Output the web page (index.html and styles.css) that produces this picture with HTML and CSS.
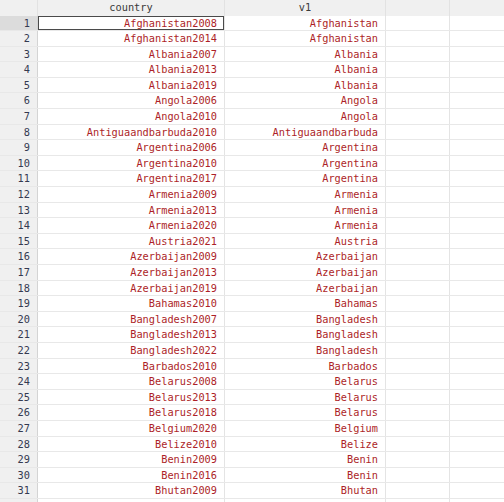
FILE: index.html
```html
<!DOCTYPE html>
<html>
<head>
<meta charset="utf-8">
<link rel="stylesheet" href="styles.css">
</head>
<body>
<div class="browser">
  <div class="row head">
    <div class="cell num"></div>
    <div class="cell title">country</div>
    <div class="cell title">v1</div>
    <div class="cell"></div>
    <div class="cell last"></div>
  </div>
  <div class="row sel"><div class="cell num">1</div><div class="cell val current">Afghanistan2008</div><div class="cell val">Afghanistan</div><div class="cell"></div><div class="cell last"></div></div>
  <div class="row"><div class="cell num">2</div><div class="cell val">Afghanistan2014</div><div class="cell val">Afghanistan</div><div class="cell"></div><div class="cell last"></div></div>
  <div class="row"><div class="cell num">3</div><div class="cell val">Albania2007</div><div class="cell val">Albania</div><div class="cell"></div><div class="cell last"></div></div>
  <div class="row"><div class="cell num">4</div><div class="cell val">Albania2013</div><div class="cell val">Albania</div><div class="cell"></div><div class="cell last"></div></div>
  <div class="row"><div class="cell num">5</div><div class="cell val">Albania2019</div><div class="cell val">Albania</div><div class="cell"></div><div class="cell last"></div></div>
  <div class="row"><div class="cell num">6</div><div class="cell val">Angola2006</div><div class="cell val">Angola</div><div class="cell"></div><div class="cell last"></div></div>
  <div class="row"><div class="cell num">7</div><div class="cell val">Angola2010</div><div class="cell val">Angola</div><div class="cell"></div><div class="cell last"></div></div>
  <div class="row"><div class="cell num">8</div><div class="cell val">Antiguaandbarbuda2010</div><div class="cell val">Antiguaandbarbuda</div><div class="cell"></div><div class="cell last"></div></div>
  <div class="row"><div class="cell num">9</div><div class="cell val">Argentina2006</div><div class="cell val">Argentina</div><div class="cell"></div><div class="cell last"></div></div>
  <div class="row"><div class="cell num">10</div><div class="cell val">Argentina2010</div><div class="cell val">Argentina</div><div class="cell"></div><div class="cell last"></div></div>
  <div class="row"><div class="cell num">11</div><div class="cell val">Argentina2017</div><div class="cell val">Argentina</div><div class="cell"></div><div class="cell last"></div></div>
  <div class="row"><div class="cell num">12</div><div class="cell val">Armenia2009</div><div class="cell val">Armenia</div><div class="cell"></div><div class="cell last"></div></div>
  <div class="row"><div class="cell num">13</div><div class="cell val">Armenia2013</div><div class="cell val">Armenia</div><div class="cell"></div><div class="cell last"></div></div>
  <div class="row"><div class="cell num">14</div><div class="cell val">Armenia2020</div><div class="cell val">Armenia</div><div class="cell"></div><div class="cell last"></div></div>
  <div class="row"><div class="cell num">15</div><div class="cell val">Austria2021</div><div class="cell val">Austria</div><div class="cell"></div><div class="cell last"></div></div>
  <div class="row"><div class="cell num">16</div><div class="cell val">Azerbaijan2009</div><div class="cell val">Azerbaijan</div><div class="cell"></div><div class="cell last"></div></div>
  <div class="row"><div class="cell num">17</div><div class="cell val">Azerbaijan2013</div><div class="cell val">Azerbaijan</div><div class="cell"></div><div class="cell last"></div></div>
  <div class="row"><div class="cell num">18</div><div class="cell val">Azerbaijan2019</div><div class="cell val">Azerbaijan</div><div class="cell"></div><div class="cell last"></div></div>
  <div class="row"><div class="cell num">19</div><div class="cell val">Bahamas2010</div><div class="cell val">Bahamas</div><div class="cell"></div><div class="cell last"></div></div>
  <div class="row"><div class="cell num">20</div><div class="cell val">Bangladesh2007</div><div class="cell val">Bangladesh</div><div class="cell"></div><div class="cell last"></div></div>
  <div class="row"><div class="cell num">21</div><div class="cell val">Bangladesh2013</div><div class="cell val">Bangladesh</div><div class="cell"></div><div class="cell last"></div></div>
  <div class="row"><div class="cell num">22</div><div class="cell val">Bangladesh2022</div><div class="cell val">Bangladesh</div><div class="cell"></div><div class="cell last"></div></div>
  <div class="row"><div class="cell num">23</div><div class="cell val">Barbados2010</div><div class="cell val">Barbados</div><div class="cell"></div><div class="cell last"></div></div>
  <div class="row"><div class="cell num">24</div><div class="cell val">Belarus2008</div><div class="cell val">Belarus</div><div class="cell"></div><div class="cell last"></div></div>
  <div class="row"><div class="cell num">25</div><div class="cell val">Belarus2013</div><div class="cell val">Belarus</div><div class="cell"></div><div class="cell last"></div></div>
  <div class="row"><div class="cell num">26</div><div class="cell val">Belarus2018</div><div class="cell val">Belarus</div><div class="cell"></div><div class="cell last"></div></div>
  <div class="row"><div class="cell num">27</div><div class="cell val">Belgium2020</div><div class="cell val">Belgium</div><div class="cell"></div><div class="cell last"></div></div>
  <div class="row"><div class="cell num">28</div><div class="cell val">Belize2010</div><div class="cell val">Belize</div><div class="cell"></div><div class="cell last"></div></div>
  <div class="row"><div class="cell num">29</div><div class="cell val">Benin2009</div><div class="cell val">Benin</div><div class="cell"></div><div class="cell last"></div></div>
  <div class="row"><div class="cell num">30</div><div class="cell val">Benin2016</div><div class="cell val">Benin</div><div class="cell"></div><div class="cell last"></div></div>
  <div class="row"><div class="cell num">31</div><div class="cell val">Bhutan2009</div><div class="cell val">Bhutan</div><div class="cell"></div><div class="cell last"></div></div>
  <div class="row"><div class="cell num"></div><div class="cell val"></div><div class="cell val"></div><div class="cell"></div><div class="cell last"></div></div>
</div>
</body>
</html>
```

FILE: styles.css
```css
html, body {
  margin: 0;
  padding: 0;
  background: #ffffff;
  overflow: hidden;
}

.browser {
  width: 504px;
  height: 502px;
  overflow: hidden;
  font-family: "DejaVu Sans Mono", "Liberation Mono", monospace;
  font-size: 10.3px;
}

.row {
  display: grid;
  grid-template-columns: 38px 187px 161px 64px 1fr;
  height: 15.6px;
  box-sizing: border-box;
  border-bottom: 1px solid #e8e8e8;
}

.row.head {
  height: 15.5px;
  background: #f0f0f0;
  border-bottom: none;
}

.cell {
  box-sizing: border-box;
  border-right: 1px solid #e4e4e4;
  padding: 0 7px;
  line-height: 14.6px;
  white-space: nowrap;
  overflow: hidden;
}

.cell.last {
  border-right: none;
}

.head .cell {
  border-right: 1px solid #e2e2e2;
  line-height: 15px;
}

.head .cell.last {
  border-right: none;
}

.title {
  text-align: center;
  color: #3a3a3a;
}

.num {
  background: #f0f0f0;
  color: #343a50;
  text-align: right;
  border-right: 1px solid #d4d4d4;
}

.sel .num {
  background: #dcdcdc;
}

.val {
  text-align: right;
  color: #ad1f28;
}

.current {
  box-shadow: inset 0 0 0 1px #4a4a4a;
}
```
